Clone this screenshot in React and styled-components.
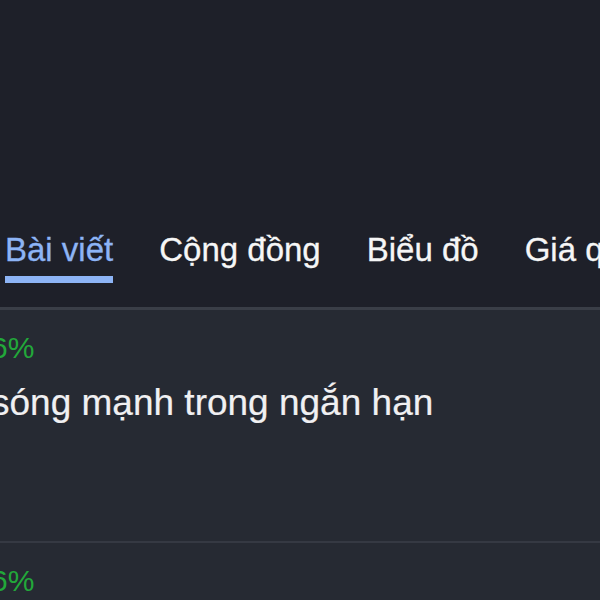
import React from 'react';
import styled, { createGlobalStyle } from 'styled-components';

const GlobalStyle = createGlobalStyle`
  html, body {
    margin: 0;
    padding: 0;
    background: #1e2029;
    overflow: hidden;
  }
`;

const Page = styled.div`
  width: 600px;
  height: 600px;
  overflow: hidden;
  background-color: #1e2029;
  font-family: 'Liberation Sans', Arial, sans-serif;
  display: flex;
  flex-direction: column;
`;

const TopArea = styled.div`
  height: 231px;
  flex-shrink: 0;
`;

const TabBar = styled.nav`
  display: flex;
  gap: 46px;
  padding: 0 0 24px 5px;
  border-bottom: 3px solid #3a3e47;
  white-space: nowrap;
  flex-shrink: 0;
`;

const Tab = styled.div`
  display: flex;
  flex-direction: column;
  cursor: pointer;
`;

const TabLabel = styled.span`
  font-size: 33px;
  line-height: 38px;
  color: ${props => (props.active ? '#8db4f5' : '#f6f6f6')};
  -webkit-text-stroke: 0.3px currentColor;
`;

const TabIndicator = styled.div`
  margin-top: 7px;
  height: 7px;
  background: ${props => (props.active ? '#8db4f5' : 'transparent')};
`;

const Feed = styled.div`
  flex: 1;
  background-color: #262a33;
`;

const Card = styled.article`
  min-height: 210px;
  padding-top: 21px;
  border-bottom: 2px solid #353943;
`;

const CardBody = styled.div`
  margin-left: -9px;
  display: flex;
  flex-direction: column;
  gap: 16px;
  white-space: nowrap;
`;

const Change = styled.span`
  font-size: 30px;
  line-height: 34.5px;
  color: #22a83a;
`;

const Title = styled.h3`
  margin: 0;
  font-size: 37px;
  line-height: 42.5px;
  font-weight: 400;
  color: #f0f0f2;
  -webkit-text-stroke: 0.2px currentColor;
`;

const tabs = ['Bài viết', 'Cộng đồng', 'Biểu đồ', 'Giá quá khứ'];

const posts = [
  { id: 1, change: '6%', title: 'sóng mạnh trong ngắn hạn' },
  { id: 2, change: '6%', title: 'sóng mạnh trong ngắn hạn' },
];

export default function App() {
  return (
    <>
      <GlobalStyle />
      <Page>
        <TopArea />
        <TabBar>
          {tabs.map((tab, index) => (
            <Tab key={tab}>
              <TabLabel active={index === 0}>{tab}</TabLabel>
              <TabIndicator active={index === 0} />
            </Tab>
          ))}
        </TabBar>
        <Feed>
          {posts.map(post => (
            <Card key={post.id}>
              <CardBody>
                <Change>{post.change}</Change>
                <Title>{post.title}</Title>
              </CardBody>
            </Card>
          ))}
        </Feed>
      </Page>
    </>
  );
}
